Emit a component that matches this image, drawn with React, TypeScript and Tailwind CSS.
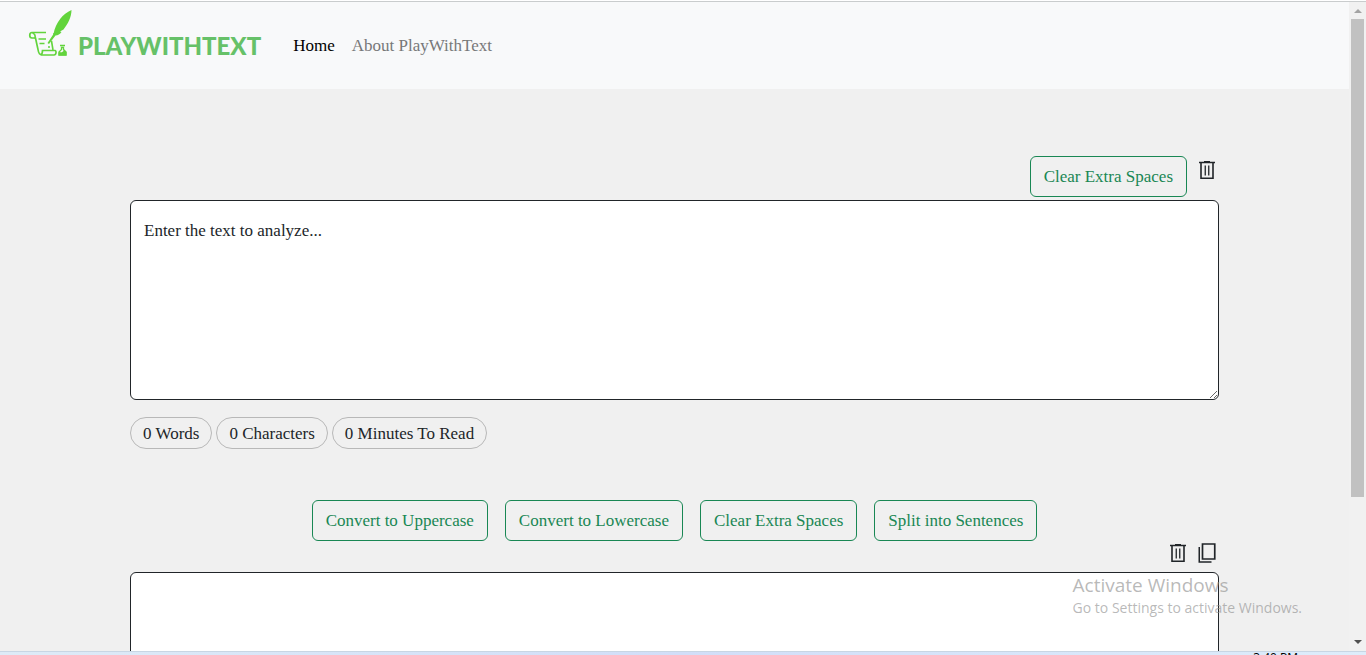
import { useState } from "react";
import type { ReactNode } from "react";

function QuillLogo() {
  return (
    <svg width="44" height="48" viewBox="0 0 44 48" fill="none" stroke="#62d43c" aria-hidden="true">
      <path d="M43.500 0C39 2 35 5 32.500 8.500C29 13 26.500 18 25.500 24L19.500 33L21 34L27.500 25.500C30 25.500 32 24 33.500 22L32 21.500L35.500 19.500C40 14 43.500 7 43.500 0Z" fill="#62d43c" stroke="none" />
      <path d="M18 22.500H4C1 22.500 1 28 4 28H7.500L10 39.500C10.500 43 11.500 45 14 45H26C28.500 45 28.500 40.500 27 40.500H14.500C14.500 43 14 44.500 12.500 45" strokeWidth="1.700" />
      <path d="M4.500 23C7.500 24 7.500 26 7 28.500M23.500 31L25 40M25 24H29" strokeWidth="1.600" />
      <path d="M10.500 29H18M11.500 33.500H16.500M20 37H22" strokeWidth="1.700" />
      <path d="M32 35.500H37M31 45V42L33.500 39.500V37.500H35.500V39.500L38 42V45Z" strokeWidth="1.300" />
      <path d="M30.500 42.500C33 42 35 43 36 39.500L38.500 42V45.500H30.500Z" fill="#62d43c" stroke="none" />
    </svg>
  );
}

function TrashIcon() {
  return (
    <svg width="18" height="20" viewBox="0 0 18 20" fill="none" stroke="#212529" aria-hidden="true">
      <path d="M1 2.500H17" strokeWidth="1.500" />
      <path d="M6 1.500H12" />
      <path d="M3 3V18.250H15V3" strokeWidth="1.600" />
      <path d="M7.250 5.500V15.500M10.750 5.500V15.500" strokeWidth="1.300" />
    </svg>
  );
}

function CopyIcon() {
  return (
    <svg width="18" height="20" viewBox="0 0 18 20" fill="none" stroke="#212529" aria-hidden="true">
      <path d="M4.500 1H16.750V16H4.500Z" strokeWidth="1.700" />
      <path d="M1.250 4V19H13.500" strokeWidth="1.500" />
    </svg>
  );
}

function ActionButton({ children, onClick }: { children: ReactNode; onClick: () => void }) {
  return (
    <button
      type="button"
      onClick={onClick}
      className="rounded-md border border-[#198754] px-[13px] py-2 leading-[23px] text-[#198754]"
    >
      {children}
    </button>
  );
}

function Pill({ children }: { children: ReactNode }) {
  return <span className="rounded-full border border-[#b8b8b8] px-3 pt-1 pb-[2px] leading-6">{children}</span>;
}

function Scrollbar() {
  return (
    <div className="flex w-[17px] shrink-0 flex-col items-center bg-[#f1f1f1]" aria-hidden="true">
      <svg width="17" height="17" viewBox="0 0 17 17">
        <path d="M5 11L9 7L13 11Z" fill="#a3a3a3" />
      </svg>
      <div className="flex w-[13px] flex-1 flex-col">
        <div className="basis-7/9 bg-[#c1c1c1]" />
      </div>
      <svg width="17" height="17" viewBox="0 0 17 17">
        <path d="M5 6L9 10L13 6Z" fill="#505050" />
      </svg>
    </div>
  );
}

export default function App() {
  const [text, setText] = useState("");
  const [result, setResult] = useState("");
  const trimmed = text.trim();
  const words = trimmed ? trimmed.split(/\s+/).length : 0;
  const clean = (value: string) => value.replace(/\s+/g, " ").trim();

  return (
    <div className="relative flex h-screen flex-col overflow-hidden bg-[#f0f0f0] font-['Liberation_Serif',serif] text-[17px] text-[#212529]">
      <div className="h-[2px] shrink-0 border-b border-[#c9cccd] bg-white" />
      <div className="flex min-h-0 flex-1">
        <div className="min-w-0 flex-1 overflow-hidden">
          <header className="flex h-[87px] items-start bg-[#f8f9fa] pt-2 pl-7">
            <a href="#" className="flex items-start">
              <QuillLogo />
              <span className="ml-[6px] pt-5 font-['Lato',sans-serif] text-2xl leading-8 font-black text-[#66c168]">
                PLAYWITHTEXT
              </span>
            </a>
            <nav className="ml-8 flex gap-[17px] pt-6 leading-6">
              <a href="#home" className="text-black">Home</a>
              <a href="#about" className="text-[#777879]">About PlayWithText</a>
            </nav>
          </header>
          <main className="px-[130px] pt-[67px]">
            <div className="flex h-11 items-start justify-end gap-[11px] pr-[3px]">
              <ActionButton onClick={() => setText(clean(text))}>Clear Extra Spaces</ActionButton>
              <button type="button" aria-label="Clear text" onClick={() => setText("")} className="pt-1">
                <TrashIcon />
              </button>
            </div>
            <textarea
              aria-label="Text to analyze"
              placeholder="Enter the text to analyze..."
              value={text}
              onChange={(e) => setText(e.target.value)}
              className="block h-[200px] w-full rounded-md border border-[#212529] bg-white px-[13px] py-[18px] leading-6 placeholder:text-[#212529]"
            />
            <div className="mt-[17px] flex gap-1">
              <Pill>{words} Words</Pill>
              <Pill>{text.length} Characters</Pill>
              <Pill>{Math.ceil(words / 200)} Minutes To Read</Pill>
            </div>
            <div className="mt-[51px] flex justify-center gap-[17px]">
              <ActionButton onClick={() => setResult(text.toUpperCase())}>Convert to Uppercase</ActionButton>
              <ActionButton onClick={() => setResult(text.toLowerCase())}>Convert to Lowercase</ActionButton>
              <ActionButton onClick={() => setResult(clean(text))}>Clear Extra Spaces</ActionButton>
              <ActionButton onClick={() => setResult(text.replace(/([.!?])\s+/g, "$1\n"))}>Split into Sentences</ActionButton>
            </div>
            <div className="flex h-[31px] items-start justify-end gap-[11px] pt-[2px] pr-[3px]">
              <button type="button" aria-label="Clear result" onClick={() => setResult("")}>
                <TrashIcon />
              </button>
              <button type="button" aria-label="Copy result" onClick={() => navigator.clipboard.writeText(result)}>
                <CopyIcon />
              </button>
            </div>
            <textarea
              aria-label="Result"
              value={result}
              onChange={(e) => setResult(e.target.value)}
              className="block h-[200px] w-full rounded-md border border-[#212529] bg-white px-[13px] py-[18px] leading-6"
            />
          </main>
        </div>
        <Scrollbar />
      </div>
      <div className="flex h-1 shrink-0 justify-end overflow-hidden border-t border-[#c8d6e4] bg-linear-to-r from-[#deebf7] via-[#d2def8] to-[#deedfb] pr-[68px] font-['Open_Sans',sans-serif] text-xs leading-3 text-black">
        <span>3:40 PM</span>
      </div>
      <div className="pointer-events-none absolute right-[64px] bottom-[37px] font-['Open_Sans',sans-serif] text-[#8a8a8a]/60">
        <p className="text-[19px] leading-[26px]">Activate Windows</p>
        <p className="text-sm leading-5">Go to Settings to activate Windows.</p>
      </div>
    </div>
  );
}
